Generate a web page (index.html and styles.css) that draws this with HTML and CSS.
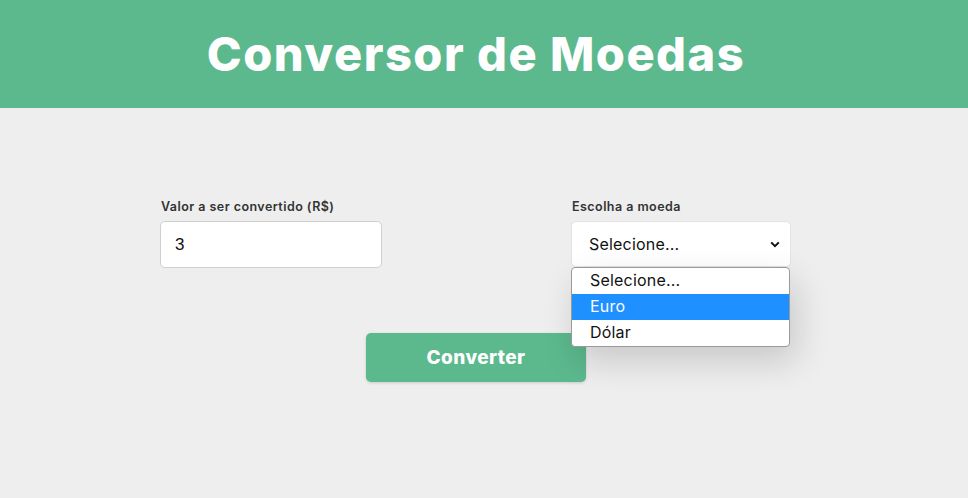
FILE: index.html
```html
<!DOCTYPE html>
<html lang="pt-BR">
<head>
<meta charset="utf-8">
<title>Conversor de Moedas</title>
<link rel="stylesheet" href="styles.css">
</head>
<body>
<div class="page">
  <header class="topbar">
    <h1 class="title">Conversor de Moedas</h1>
  </header>
  <main class="content">
    <div class="form">
      <div class="row">
        <div class="field field-left">
          <label class="label">Valor a ser convertido (R$)</label>
          <div class="input">3</div>
        </div>
        <div class="field field-right">
          <label class="label">Escolha a moeda</label>
          <div class="select">
            <span class="select-text">Selecione...</span>
            <svg class="chevron" width="10" height="7" viewBox="0 0 10 7"><path d="M1.2 1.4 L5 5.2 L8.8 1.4" fill="none" stroke="#111" stroke-width="2"/></svg>
          </div>
          <ul class="menu">
            <li class="option">Selecione...</li>
            <li class="option option-active">Euro</li>
            <li class="option">Dólar</li>
          </ul>
        </div>
      </div>
      <div class="actions">
        <button class="button">Converter</button>
      </div>
    </div>
  </main>
</div>
</body>
</html>
```
FILE: styles.css
```css
* { box-sizing: border-box; }
html, body { margin: 0; padding: 0; }
body {
  background: #eeeeee;
  font-family: "Inter", "Open Sans", sans-serif;
  width: 968px;
  height: 498px;
  overflow: hidden;
}
.page { width: 968px; }
.topbar {
  background: #5cb98e;
  height: 108px;
  padding-right: 16px;
  display: flex;
  align-items: center;
  justify-content: center;
}
.title {
  margin: 0;
  color: #ffffff;
  font-size: 47px;
  font-weight: 800;
  letter-spacing: 1.5px;
  line-height: 1;
  padding-bottom: 2px;
}
.content { padding-top: 90px; }
.form { width: 631px; margin-left: 160px; }
.row { display: flex; justify-content: space-between; }
.field { position: relative; display: flex; flex-direction: column; }
.field-left { width: 222px; }
.field-right { width: 220px; }
.label {
  font-size: 12.5px;
  font-weight: 600;
  letter-spacing: 0.45px;
  color: #333333;
  line-height: 18px;
  margin-left: 1px;
  margin-bottom: 5px;
}
.input {
  height: 47px;
  background: #ffffff;
  border: 1px solid #cfcfcf;
  border-radius: 5px;
  padding-left: 14px;
  display: flex;
  align-items: center;
  font-family: "Liberation Sans", Arial, sans-serif;
  font-size: 17px;
  color: #111;
}
.select {
  height: 46px;
  background: #ffffff;
  border: 1px solid #e2e2e2;
  border-radius: 5px;
  padding: 0 10px 0 17px;
  display: flex;
  align-items: center;
  justify-content: space-between;
  font-size: 16px;
  letter-spacing: 0.2px;
  color: #111;
}
.chevron { display: block; }
.menu {
  position: absolute;
  top: calc(100% - 1px);
  left: 0;
  width: 219px;
  margin: 0;
  padding: 0;
  list-style: none;
  background: #ffffff;
  border: 1px solid #9a9a9a;
  border-radius: 4px;
  overflow: hidden;
  box-shadow: 6px 14px 34px rgba(0,0,0,0.16);
  z-index: 2;
}
.option {
  height: 26px;
  line-height: 25px;
  padding-left: 18px;
  font-size: 16px;
  letter-spacing: 0.2px;
  color: #111;
}
.option-active { background: #1e90ff; color: #ffffff; }
.actions { display: flex; justify-content: center; margin-top: 65px; padding-left: 1px; }
.button {
  width: 220px;
  height: 49px;
  border: none;
  border-radius: 5px;
  background: #5cb98e;
  color: #ffffff;
  font-family: "Inter", "Open Sans", sans-serif;
  font-size: 19px;
  font-weight: 800;
  letter-spacing: 0.4px;
  box-shadow: 0 1px 3px rgba(0,0,0,0.15);
}
```
